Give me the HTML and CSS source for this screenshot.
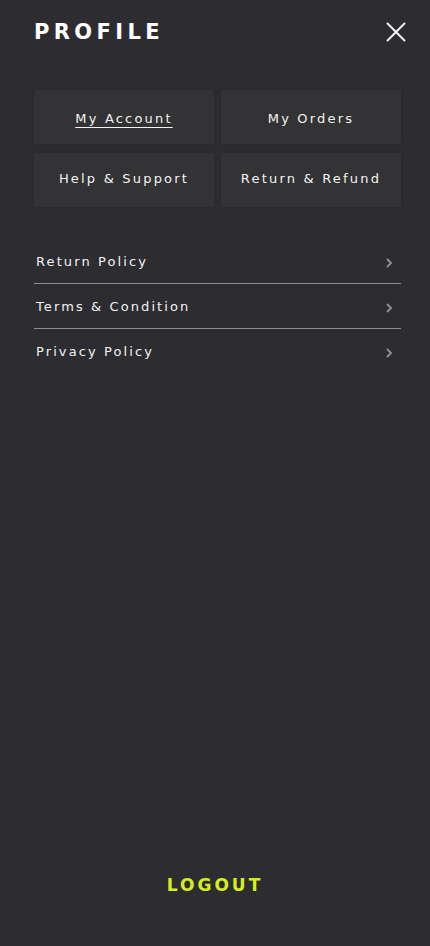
FILE: index.html
```html
<!DOCTYPE html>
<html lang="en">
<head>
<meta charset="utf-8">
<title>Profile</title>
<link rel="stylesheet" href="styles.css">
</head>
<body>
<div class="page">
  <header class="header">
    <h1 class="title">PROFILE</h1>
    <button class="close" aria-label="Close">
      <svg width="20" height="20" viewBox="0 0 20 20"><path d="M1.5 1.5 L18.5 18.5 M18.5 1.5 L1.5 18.5" stroke="#ffffff" stroke-width="1.8" fill="none" stroke-linecap="round"/></svg>
    </button>
  </header>
  <nav class="grid">
    <a class="card top active">My Account</a>
    <a class="card top">My Orders</a>
    <a class="card bottom">Help &amp; Support</a>
    <a class="card bottom">Return &amp; Refund</a>
  </nav>
  <ul class="list">
    <li class="item"><span>Return Policy</span><svg class="chev" width="8" height="12" viewBox="0 0 8 12"><path d="M2 2 L6 6 L2 10" stroke="#8f8f92" stroke-width="2" fill="none"/></svg></li>
    <li class="item"><span>Terms &amp; Condition</span><svg class="chev" width="8" height="12" viewBox="0 0 8 12"><path d="M2 2 L6 6 L2 10" stroke="#8f8f92" stroke-width="2" fill="none"/></svg></li>
    <li class="item"><span>Privacy Policy</span><svg class="chev" width="8" height="12" viewBox="0 0 8 12"><path d="M2 2 L6 6 L2 10" stroke="#8f8f92" stroke-width="2" fill="none"/></svg></li>
  </ul>
  <div class="spacer"></div>
  <div class="logout">LOGOUT</div>
</div>
</body>
</html>
```
FILE: styles.css
```css
html, body {
  margin: 0;
  padding: 0;
  background: #2d2c31;
}
body {
  font-family: "DejaVu Sans", "Liberation Sans", sans-serif;
  color: #ffffff;
}
.page {
  min-height: 946px;
  display: flex;
  flex-direction: column;
  box-sizing: border-box;
  padding: 0 29px 0 34px;
}
.header {
  display: flex;
  justify-content: space-between;
  align-items: center;
  height: 64px;
  margin-right: -5px;
}
.title {
  margin: 0;
  font-size: 21px;
  font-weight: 600;
  letter-spacing: 4.4px;
  line-height: 1;
}
.close {
  background: none;
  border: 0;
  padding: 0;
  width: 20px;
  height: 20px;
  display: flex;
}
.grid {
  margin-top: 26px;
  display: grid;
  grid-template-columns: 1fr 1fr;
  column-gap: 7px;
  row-gap: 9px;
}
.card {
  height: 54px;
  box-sizing: border-box;
  background: #333234;
  display: flex;
  align-items: center;
  justify-content: center;
  font-size: 13px;
  letter-spacing: 2.2px;
  color: #f2f2f2;
  box-shadow: 0 0 3px rgba(0,0,0,0.15);
}
.card.top {
  padding-top: 3px;
}
.card.bottom {
  padding-bottom: 3px;
}
.card.active {
  text-decoration: underline;
  text-underline-offset: 4px;
}
.list {
  list-style: none;
  margin: 32px 0 0;
  padding: 0;
}
.item {
  display: flex;
  justify-content: space-between;
  align-items: center;
  height: 44px;
  border-bottom: 1px solid #8e8d90;
  font-size: 13px;
  letter-spacing: 2.1px;
  color: #f2f2f2;
  padding: 0 8px 0 2px;
}
.item:last-child {
  border-bottom: 0;
}
.chev {
  display: block;
  margin-top: 3px;
}
.spacer {
  flex: 1;
}
.logout {
  text-align: center;
  color: #d8ee1b;
  font-size: 17px;
  font-weight: 600;
  letter-spacing: 3px;
  padding-bottom: 51px;
  margin-left: -5px;
}
```
